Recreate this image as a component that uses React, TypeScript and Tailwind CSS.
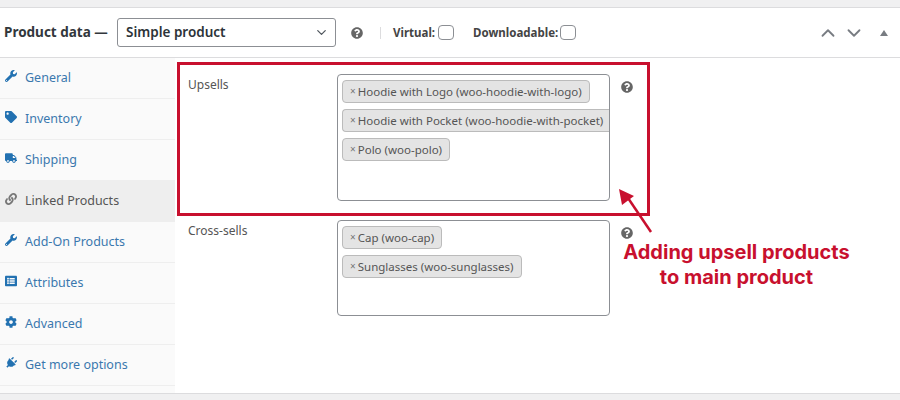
import React from 'react'
import { FaWrench, FaTag, FaTruck, FaLink, FaListAlt, FaCog, FaPlug, FaQuestionCircle } from 'react-icons/fa'
import { ChevronDown, ChevronUp } from 'lucide-react'

const tabs = [
    { label: 'General', icon: FaWrench, iconClass: '' },
    { label: 'Inventory', icon: FaTag, iconClass: '' },
    { label: 'Shipping', icon: FaTruck, iconClass: '' },
    { label: 'Linked Products', icon: FaLink, iconClass: '', active: true },
    { label: 'Add-On Products', icon: FaWrench, iconClass: '' },
    { label: 'Attributes', icon: FaListAlt, iconClass: '' },
    { label: 'Advanced', icon: FaCog, iconClass: '' },
    { label: 'Get more options', icon: FaPlug, iconClass: 'rotate-45' },
]

function Tag({ text, wide }: { text: string; wide?: boolean }) {
    return (
        <div className={wide
            ? 'h-[23px] flex items-center pl-[7px] bg-[#e4e4e4] border border-[#bbbbbb] border-r-0 rounded-l-[4px] whitespace-nowrap'
            : 'h-[23px] w-fit flex items-center pl-[7px] pr-[7px] bg-[#e4e4e4] border border-[#bbbbbb] rounded-[4px] whitespace-nowrap'}>
            <span className="text-[10px] text-[#777777] mr-[2px]">×</span>
            <span className="text-[11.5px] text-[#555555]">{text}</span>
        </div>
    )
}

function Field({ label, height, tags, wideIndex }: { label: string; height: string; tags: string[]; wideIndex?: number }) {
    return (
        <div className="flex">
            <div className="w-[162px] pl-[13px] text-[12px] text-[#555555] leading-[22px]">{label}</div>
            <div className={`w-[273px] ${height} border border-[#8c8f94] rounded-[4px] bg-white pl-[4px] pt-[5px] flex flex-col gap-[6px]`}>
                {tags.map((t, i) => <Tag key={t} text={t} wide={i === wideIndex} />)}
            </div>
            <FaQuestionCircle className="ml-[11px] mt-[7px] w-[12px] h-[12px] text-[#666666]" />
        </div>
    )
}

export default function App() {
    return (
        <div className="relative w-[900px] h-[400px] overflow-hidden bg-[#f0f0f1] pt-[7px] font-['Noto_Sans',sans-serif]">
            <div className="h-[387px] bg-white border-y border-[#dcdcde] flex flex-col">
                {/* Header */}
                <div className="h-[50px] flex-none flex items-center border-b border-[#dcdcde] pl-[4px]">
                    <span className="w-[113px] text-[13.5px] font-bold text-[#32373c] whitespace-nowrap">Product data —</span>
                    <div className="w-[219px] h-[29px] flex items-center justify-between border border-[#8c8f94] rounded-[3px] pl-[8px] pr-[6px] text-[13.5px] font-semibold text-[#2c3338]">
                        Simple product
                        <ChevronDown className="w-[15px] h-[15px] text-[#50575e]" />
                    </div>
                    <FaQuestionCircle className="ml-[15px] w-[12px] h-[12px] text-[#666666]" />
                    <div className="ml-[17px] w-px h-[12px] bg-[#dcdcde]" />
                    <span className="ml-[12px] text-[11.5px] font-bold text-[#444444]">Virtual:</span>
                    <div className="ml-[3px] w-[16px] h-[15px] border border-[#8c8f94] rounded-[4px]" />
                    <span className="ml-[19px] text-[11.5px] font-bold text-[#444444]">Downloadable:</span>
                    <div className="ml-[2px] w-[16px] h-[15px] border border-[#8c8f94] rounded-[4px]" />
                    <ChevronUp className="ml-[241px] w-[22px] h-[22px] text-[#787c82]" />
                    <ChevronDown className="ml-[4px] w-[22px] h-[22px] text-[#787c82]" />
                    <div className="ml-[15px] w-0 h-0 border-x-[4px] border-x-transparent border-b-[6px] border-b-[#787c82]" />
                </div>
                <div className="flex-1 flex min-h-0">
                    {/* Tabs */}
                    <div className="w-[175px] flex-none bg-[#fafafa] flex flex-col">
                        {tabs.map((tab) => {
                            const Icon = tab.icon
                            return (
                                <div key={tab.label} className={tab.active
                                    ? 'h-[41px] flex-none flex items-center pl-[5px] bg-[#eeeeee] border-b border-[#eeeeee] text-[#555555]'
                                    : 'h-[41px] flex-none flex items-center pl-[5px] border-b border-[#eeeeee] text-[#3a78ae]'}>
                                    <Icon className={`w-[12px] h-[12px] -translate-y-[2px] ${tab.iconClass} ${tab.active ? 'text-[#777777]' : 'text-[#2271b1]'}`} />
                                    <span className="ml-[8px] text-[12.5px] whitespace-nowrap">{tab.label}</span>
                                </div>
                            )
                        })}
                    </div>
                    {/* Panel */}
                    <div className="flex-1 pt-[16px] flex flex-col gap-[19px]">
                        <Field label="Upsells" height="h-[127px]" wideIndex={1} tags={['Hoodie with Logo (woo-hoodie-with-logo)', 'Hoodie with Pocket (woo-hoodie-with-pocket)', 'Polo (woo-polo)']} />
                        <Field label="Cross-sells" height="h-[96px]" tags={['Cap (woo-cap)', 'Sunglasses (woo-sunglasses)']} />
                    </div>
                </div>
            </div>

            {/* Annotation */}
            <div className="absolute left-[177px] top-[62px] w-[473px] h-[154px] border-[3px] border-[#c8102e]" />
            <svg className="absolute left-[615px] top-[185px]" width="40" height="50" viewBox="0 0 40 50">
                <path d="M36 47 L13 13" stroke="#c8102e" strokeWidth="2.5" fill="none" />
                <path d="M4 4 L19 11 L7 20 Z" fill="#c8102e" />
            </svg>
            <div className="absolute left-[623px] top-[240px] w-[227px] text-center text-[20px] leading-[24.5px] font-bold text-[#c8102e] font-['Inter',sans-serif] whitespace-nowrap">
                Adding upsell products
                <br />
                to main product
            </div>
        </div>
    )
}
